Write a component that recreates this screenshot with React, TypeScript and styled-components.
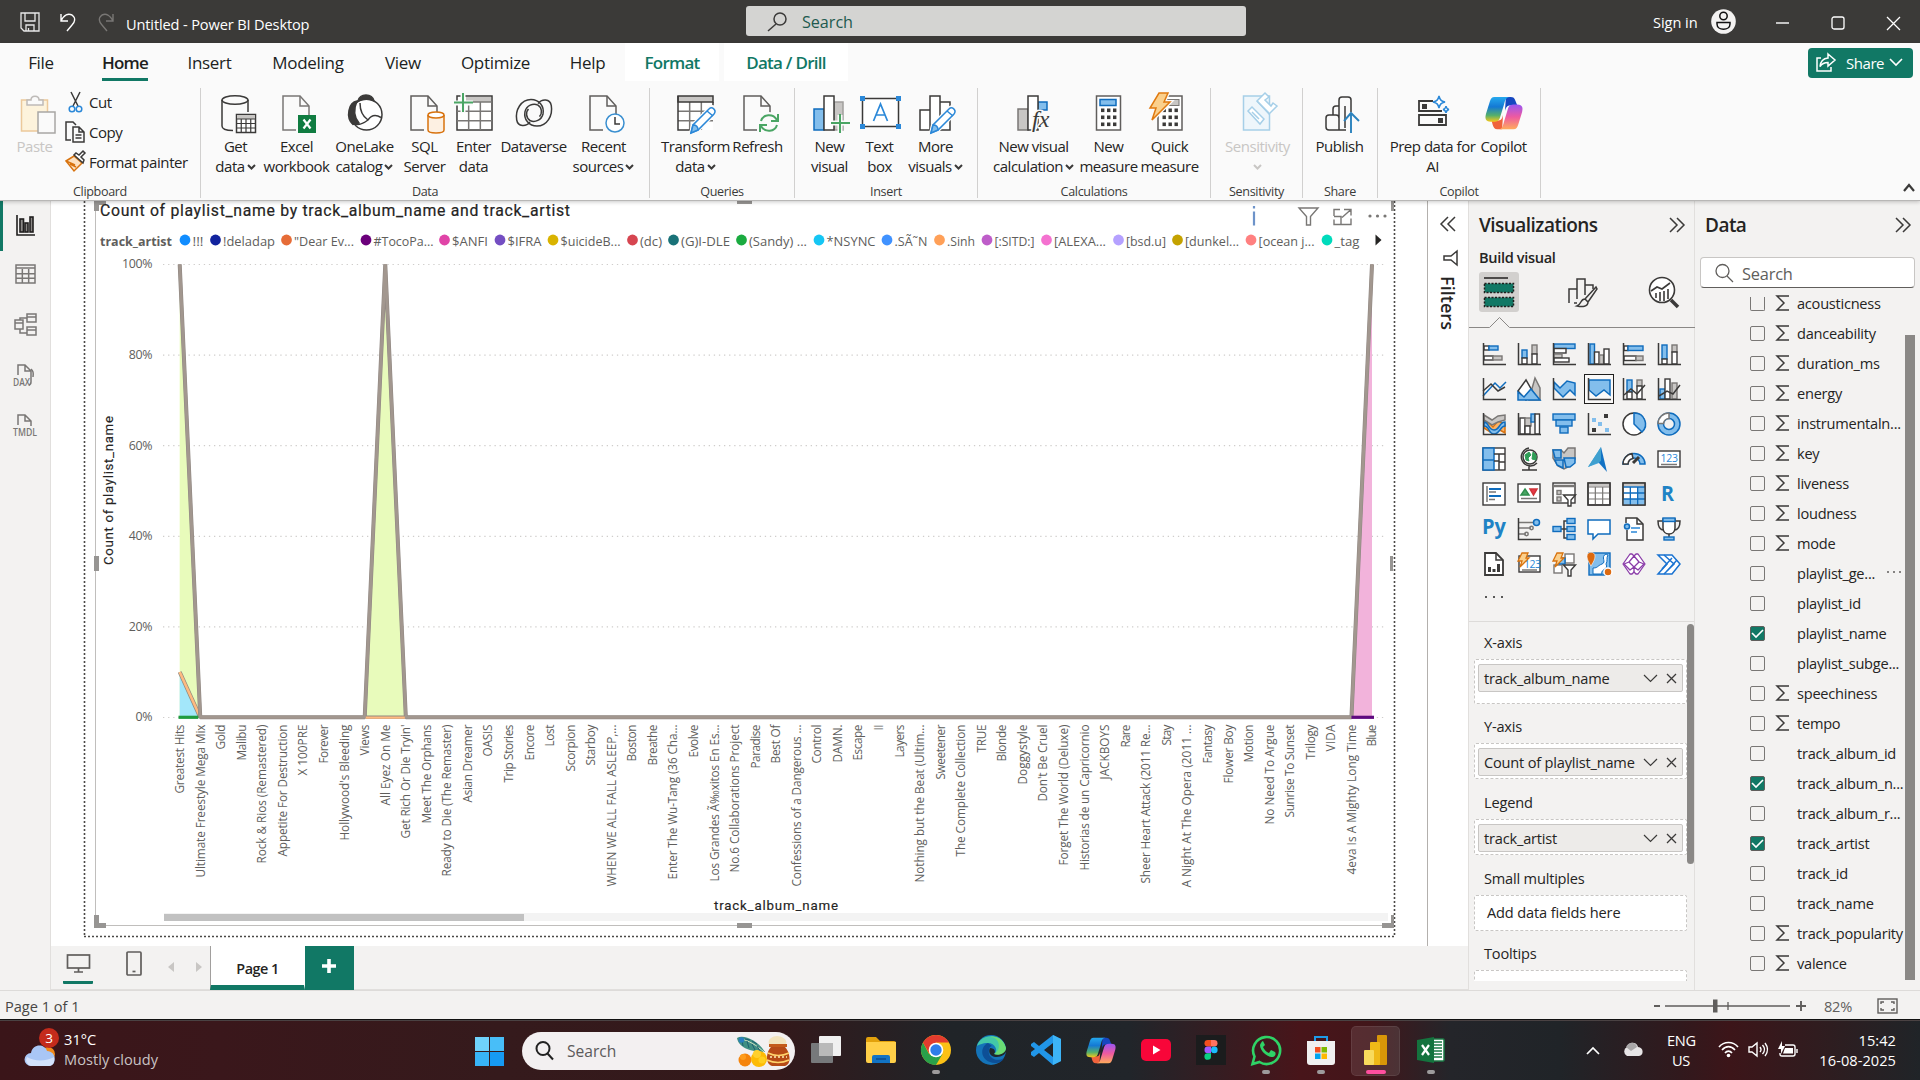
import React from "react";
import styled, { createGlobalStyle } from "styled-components";

const GREEN = "#117865";
const INK = "#252423";
const PANE = "#f3f2f1";
const G = "#3b3a39";
const M = "#797775";
const B = "#0f6cbd";
const LB = "#83beec";
const UI = `"Open Sans", "Noto Sans", "Liberation Sans", sans-serif`;

const Global = createGlobalStyle`
  * { box-sizing: border-box; }
  body { margin: 0; overflow: hidden; font-family: ${UI}; font-size: 15px; letter-spacing: -0.35px; color: ${INK}; }
  svg { display: block; flex: none; overflow: visible; }
`;

const Screen = styled.div`
  width: 1920px; height: 1080px; display: flex; flex-direction: column; background: #fff; overflow: hidden;
`;

/* ---------- title bar ---------- */
const TitleBar = styled.header`
  height: 43px; flex: none; display: flex; align-items: center; background: #3b3a38; color: #fff; padding-left: 20px;
`;
const QuickIcons = styled.div` display: flex; gap: 18px; width: 106px; `;
const AppTitle = styled.div` width: 620px; padding-top: 5px; font-size: 14.6px; letter-spacing: -0.14px; `;
const TitleSearch = styled.div`
  width: 500px; height: 30px; background: #d4d4d2; border-radius: 3px; display: flex; align-items: center; gap: 15px; margin-top: -1px;
  padding: 1px 0 0 21px; color: #215a4f; font-size: 16.2px; letter-spacing: -0.05px;
`;
const SignIn = styled.div`
  margin-left: 407px; display: flex; align-items: center; gap: 13px; font-size: 14.6px; letter-spacing: -0.05px;
`;
const WindowButtons = styled.div` display: flex; gap: 42px; margin-left: 40px; align-items: center; padding-top: 3px; `;

/* ---------- ribbon ---------- */
const RibbonWrap = styled.section`
  height: 158px; flex: none; background: #fafafa; border-bottom: 1px solid #b8b7b6; box-shadow: 0 1px 4px rgba(0,0,0,.22);
  position: relative; z-index: 2; display: flex; flex-direction: column;
`;
const TabRow = styled.nav` display: flex; height: 38px; font-size: 17px; letter-spacing: -0.3px; `;
const Tab = styled.div<{ w: number; $active?: boolean; $context?: boolean; $gap?: number }>`
  width: ${p => p.w}px; margin-right: ${p => p.$gap || 0}px; display: flex; align-items: flex-start; justify-content: center; white-space: nowrap;
  font-weight: ${p => (p.$active || p.$context ? 600 : 400)};
  letter-spacing: ${p => (p.$active || p.$context ? "-0.75px" : "-0.3px")};
  color: ${p => (p.$context ? GREEN : "#201f1e")};
  background: ${p => (p.$context ? "#fff" : "transparent")};
  span { height: 38px; display: flex; align-items: center; box-shadow: ${p => (p.$active ? `inset 0 -3px ${GREEN}` : "none")}; }
`;
const ShareButton = styled.div`
  margin: 5px 7px 0 auto; width: 105px; height: 30px; border-radius: 4px; background: ${GREEN}; color: #fff; display: flex; align-items: center;
  padding: 0 0 1px 8px; gap: 5px; font-size: 15px; letter-spacing: -0.45px; span { padding-left: 5px; }
`;
const Groups = styled.div` display: flex; padding-top: 7px; height: 118px; `;
const Group = styled.div<{ w: number }>`
  width: ${p => p.w}px; height: 110px; border-right: 1px solid #d1d0cf; display: flex; flex-direction: column;
`;
const GroupBody = styled.div<{ $pad: number }>` display: flex; flex: 1; padding-left: ${p => p.$pad}px; `;
const GroupLabel = styled.div` height: 18px; line-height: 18px; margin-bottom: -3px; text-align: center; font-size: 12.6px; letter-spacing: -0.35px; color: #3b3a39; white-space: nowrap; `;
const RibbonButton = styled.div<{ w: number; $off?: boolean }>`
  width: ${p => p.w}px; flex: none; display: flex; flex-direction: column; align-items: center; padding-top: 4px; color: ${p => (p.$off ? "#c8c6c4" : INK)};
`;
const RibbonText = styled.div`
  line-height: 20px; font-size: 15px; letter-spacing: -0.48px; text-align: center; white-space: nowrap; margin-left: -1px;
  div { display: flex; align-items: center; justify-content: center; gap: 2px; height: 20px; }
  svg { margin-top: 2px; }
`;
const ClipList = styled.div` display: flex; flex-direction: column; margin: -1px 0 1px; `;
const ClipItem = styled.div` height: 30px; display: flex; align-items: center; gap: 3px; letter-spacing: -0.43px; white-space: nowrap; `;
const Collapse = styled.div` margin-left: auto; padding: 95px 5px 0 0; `;

/* ---------- workspace ---------- */
const Workspace = styled.main` display: flex; height: 789px; flex: none; background: ${PANE}; `;
const Rail = styled.aside`
  width: 51px; border-right: 1px solid #e1dfdd; background: ${PANE}; display: flex; flex-direction: column; flex: none;
`;
const RailItem = styled.div<{ $active?: boolean }>`
  height: 50px; display: flex; align-items: center; padding: 0 0 2px ${p => (p.$active ? 9 : 12)}px; border-left: ${p => (p.$active ? `3px solid ${GREEN}` : "none")};
`;
const Center = styled.div` width: 1418px; flex: none; display: flex; flex-direction: column; border-right: 1px solid #e1dfdd; `;
const CanvasRow = styled.div` height: 745px; display: flex; background: #fff; `;
const Canvas = styled.div` width: 1377px; border-right: 1px solid #b3b0ad; `;
const FiltersPane = styled.div` display: flex; flex-direction: column; align-items: center; gap: 18px; width: 42px; padding-top: 15px; `;
const FilterGlyph = styled.div` padding-left: 5px; `;
const FiltersTitle = styled.div` writing-mode: vertical-rl; font-size: 18px; font-weight: 600; letter-spacing: 0.05px; margin-top: -8px; `;

const PageBar = styled.div` height: 44px; display: flex; background: ${PANE}; border-bottom: 1px solid #e1dfdd; `;
const LayoutButton = styled.div<{ $active?: boolean }>`
  width: 30px; height: 38px; padding-top: 5px; display: flex; justify-content: center; border-bottom: 3px solid ${p => (p.$active ? GREEN : "transparent")}; border-radius: 1px;
`;
const LayoutButtons = styled.div` display: flex; gap: 26px; padding-left: 12px; width: 117px; `;
const PageArrows = styled.div` width: 42px; display: flex; gap: 22px; padding-top: 16px; `;
const PageTab = styled.div`
  width: 95px; border-left: 1px solid #a19f9d; border-right: 1px solid #fff; border-bottom: 5px solid ${GREEN}; background: #fff; height: 44px;
  display: flex; align-items: center; justify-content: center; padding-top: 5px; font-weight: 600; font-size: 14.4px; letter-spacing: -0.5px;
`;
const AddPage = styled.div` width: 49px; height: 44px; background: ${GREEN}; display: flex; align-items: center; justify-content: center; padding: 0 2px 4px 0; `;

/* ---------- visualizations pane ---------- */
const VizPane = styled.aside` width: 226px; flex: none; border-right: 1px solid #e1dfdd; display: flex; flex-direction: column; `;
const PaneHead = styled.div`
  height: 44px; padding: 4px 9px 0 10px; display: flex; justify-content: space-between; align-items: center; font-size: 19px; font-weight: 600; letter-spacing: -0.53px;
`;
const BuildLabel = styled.div` height: 28px; padding: 2px 0 0 10px; font-size: 14.6px; font-weight: 600; letter-spacing: -0.35px; `;
const ModeRow = styled.div` height: 40px; padding: 0 10px; display: flex; justify-content: space-between; align-items: center; margin-top: -1px; `;
const Mode = styled.div<{ $on?: boolean }>`
  width: 40px; height: 40px; display: flex; align-items: center; justify-content: center; border-radius: 3px; background: ${p => (p.$on ? "#d2d0ce" : "transparent")};
`;
const Gallery = styled.div` display: grid; grid-template-columns: repeat(6, 35px); grid-auto-rows: 35px; padding: 5px 0 0 10px; height: 251px; `;
const GalleryCell = styled.div<{ $on?: boolean }>`
  width: 30px; height: 30px; border: 1px solid ${p => (p.$on ? "#201f1e" : "transparent")}; display: flex; align-items: center; justify-content: center; background: ${p => (p.$on ? "#faf9f8" : "transparent")};
`;
const Dots = styled.div<{ $size: number; $gap: number; $color: string }>`
  display: flex; gap: ${p => p.$gap}px;
  i { width: ${p => p.$size}px; height: ${p => p.$size}px; border-radius: 50%; background: ${p => p.$color}; }
`;
const MoreVisuals = styled.div` height: 37px; padding: 11px 0 0 16px; border-bottom: 1px solid #dddbd9; `;
const Wells = styled.div` display: flex; justify-content: space-between; height: 359px; overflow: hidden; `;
const WellList = styled.div` width: 218px; padding-left: 5px; display: flex; flex-direction: column; flex: none; `;
const WellLabel = styled.div<{ $top: number; $bottom?: number }>`
  margin: ${p => p.$top}px 0 ${p => p.$bottom || 5}px; padding-left: 10px; height: 22px; line-height: 22px; font-size: 14.6px; letter-spacing: -0.2px; flex: none;
`;
const Well = styled.div<{ h: number }>`
  width: 213px; height: ${p => p.h}px; flex: none; background: #fff; border: 1px dashed #c8c6c4; border-radius: 2px; padding: 4px 3px;
`;
const Pill = styled.div`
  height: 28px; width: 205px; background: #edebe9; border: 1px solid #c8c6c4; border-radius: 2px; display: flex; align-items: center; padding: 0 5px; gap: 8px;
  font-size: 14.6px; letter-spacing: -0.2px; white-space: nowrap; span { flex: 1; }
`;
const Hint = styled.div` padding: 2px 0 0 9px; font-size: 14.6px; letter-spacing: -0.15px; `;
const WellScroll = styled.div` width: 7px; height: 240px; margin-top: 2px; border-radius: 4px; background: #8a8886; `;

/* ---------- data pane ---------- */
const DataPane = styled.aside` width: 225px; flex: none; display: flex; flex-direction: column; `;
const DataSearch = styled.div`
  margin: 12px 5px 0 5px; height: 31px; border: 1px solid #c8c6c4; border-bottom-color: #605e5c; border-radius: 4px; background: #fff; display: flex; align-items: center;
  gap: 9px; padding: 1px 0 0 14px; font-size: 16.4px; letter-spacing: -0.2px; color: #605e5c;
`;
const FieldArea = styled.div` display: flex; height: 683px; margin-top: 9px; padding-right: 5px; `;
const FieldList = styled.div` width: 205px; flex: none; `;
const Field = styled.div<{ $cut?: boolean }>`
  height: ${p => (p.$cut ? 21 : 30)}px; padding: 0 0 ${p => (p.$cut ? 9 : 0)}px 55px; display: flex; align-items: center; white-space: nowrap;
`;
const Check = styled.div<{ $on?: boolean; $cut?: boolean }>`
  width: 15px; height: ${p => (p.$cut ? 14 : 15)}px; border-radius: ${p => (p.$cut ? "0 0 2px 2px" : "2px")}; margin-top: ${p => (p.$cut ? 2 : 0)}px;
  border: 1px solid ${p => (p.$on ? "#605e5c" : "#797775")}; border-top-width: ${p => (p.$cut ? 0 : 1)}px;
  background: ${p => (p.$on ? GREEN : "transparent")}; display: flex; align-items: center; justify-content: center; flex: none;
`;
const SigmaSlot = styled.div` width: 32px; padding-left: 11px; flex: none; `;
const FieldName = styled.div` width: 108px; flex: none; font-size: 14.6px; letter-spacing: -0.25px; `;
const FieldMore = styled.div` margin-left: -18px; margin-top: -2px; `;
const FieldScroll = styled.div` width: 10px; margin: 38px 0 0 5px; height: 645px; background: #8a8886; flex: none; `;

/* ---------- status bar ---------- */
const StatusBar = styled.footer`
  height: 30px; flex: none; background: ${PANE}; border-top: 1px solid #dddbd9; border-bottom: 1px solid #111; display: flex; align-items: center; justify-content: space-between;
  padding: 1px 22px 0 5px; font-size: 14.6px; letter-spacing: -0.02px; color: #484644;
`;
const ZoomTools = styled.div` display: flex; align-items: center; color: #605e5c; gap: 21px; span { margin: 0 4px 0 -3px; letter-spacing: -0.25px; } `;

/* ---------- taskbar ---------- */
const Taskbar = styled.footer`
  height: 60px; flex: none; display: flex; align-items: center; border-top: 1px solid #4a4243; color: #fff;
  background: linear-gradient(90deg, #3a1519 0, #3a171b 220px, #351a1c 500px, #33191b 780px, #202428 950px, #21252a 1130px, #48151a 1300px, #42161a 1370px, #24252a 1450px, #202428 1560px, #31191d 1680px, #3c1519 1730px, #2e1d20 1830px, #202428 1920px);
`;
const Weather = styled.div` display: flex; gap: 5px; padding: 0 0 1px 24px; width: 474px; align-items: center; `;
const Lines = styled.div<{ $align?: string; w?: number }>`
  width: ${p => (p.w ? p.w + "px" : "auto")}; text-align: ${p => p.$align || "left"}; line-height: 20px; font-size: 14.6px; letter-spacing: ${p => (p.$align === "center" ? "-0.3px" : "0.05px")};
  white-space: nowrap; margin-top: -2px;
  small { font-size: inherit; color: #c9c3c4; }
`;
const TaskSearch = styled.div`
  width: 273px; height: 38px; margin: 0 3px 0 18px; border-radius: 19px; background: #f3f0f1; color: #5c5a5b; display: flex; align-items: center; gap: 13px; padding: 0 5px 0 13px;
  font-size: 15.6px; letter-spacing: 0; span { flex: 1; }
`;
const Apps = styled.div` display: flex; `;
const AppSlot = styled.div<{ $on?: boolean }>`
  width: 49px; height: 50px; margin: 0 3px; border-radius: 5px; display: flex; flex-direction: column; align-items: center; padding-top: 9px; gap: 5px;
  background: ${p => (p.$on ? "rgba(255,255,255,.1)" : "transparent")}; box-shadow: ${p => (p.$on ? "inset 0 0 0 1px rgba(255,255,255,.08)" : "none")};
`;
const Running = styled.i<{ $on?: boolean }>` width: ${p => (p.$on ? 20 : 8)}px; height: 4px; border-radius: 2px; background: ${p => (p.$on ? "#ff4f9f" : "#9d9b9c")}; `;
const Tray = styled.div` margin-left: auto; display: flex; align-items: center; padding-right: 24px; `;
const TrayCloud = styled.div` width: 67px; padding-left: 22px; margin-top: -1px; `;
const TrayIcons = styled.div` display: flex; gap: 9px; width: 101px; padding-left: 23px; margin-top: -2px; `;

/* ---------- small drawings ---------- */
type SvgProps = { w: number; h: number; children?: React.ReactNode; s?: string; sw?: number };
const I = ({ w, h, children, s = G, sw = 1.5 }: SvgProps) => (
  <svg width={w} height={h} viewBox={`0 0 ${w} ${h}`} fill="none" stroke={s} strokeWidth={sw}>{children}</svg>
);
const Caret = ({ c = G }: { c?: string }) => <I w={9} h={6} s={c} sw={2}><path d="M1 1l3.5 3.5L8 1" /></I>;
const Doc = ({ x = 10, c = "#605e5c" }: { x?: number; c?: string }) => (
  <g transform={`translate(${x} 4)`} stroke={c}><path d="M26 18V12L17 0H0v34h16" fill="#fafafa" stroke="none" /><path d="M13 34H0V0h17l9 10v9" /><path d="M17 0v10h9" /></g>
);
const Pencil = ({ x, y }: { x: number; y: number }) => (
  <g transform={`translate(${x} ${y})`}><path d="M1 26l2-8L20 1c3-3 8 1 5 5L8 23z" fill="#fafafa" stroke="#fafafa" strokeWidth="4" /><path d="M1 26l2-8L19 2c3-3 8 1 5 5L8 23z" fill="#fff" stroke="#2b88d8" /><path d="M1 26l2-8c4 0 5 2 5 5z" fill={LB} stroke="#2b88d8" /><path d="M17 4l6 5" stroke="#2b88d8" /></g>
);
const Calc = ({ x }: { x: number }) => (
  <g transform={`translate(${x} 4)`}><rect width="24" height="34" fill="#fff" stroke="#605e5c" />{[14, 21, 28].map(y => [4.5, 10.5, 16.5].map(a => <rect key={a + "-" + y} x={a} y={y - 1.5} width="3.4" height="3.6" fill={G} stroke="none" />))}</g>
);
const Ribbon48 = ({ children, s = G }: { children: React.ReactNode; s?: string }) => <I w={48} h={44} s={s}>{children}</I>;

const CopilotMark = ({ size, id }: { size: number; id: string }) => (
  <svg width={size} height={size * 0.9} viewBox="0 0 40 36">
    <defs>
      <linearGradient id={id + "a"} x1="0" y1="0" x2="0" y2="1"><stop offset="0" stopColor="#25a9ee" /><stop offset=".4" stopColor="#1479d4" /><stop offset=".75" stopColor="#56b06a" /><stop offset="1" stopColor="#f4c81c" /></linearGradient>
      <linearGradient id={id + "b"} x1="0" y1="0" x2="0" y2="1"><stop offset="0" stopColor="#9a55f2" /><stop offset=".5" stopColor="#ee5aa0" /><stop offset="1" stopColor="#ffac5c" /></linearGradient>
    </defs>
    <path d="M22 1h5c3 0 4 1 5 4l2 5h-7c-4 0-5 2-6 6z" fill="#1647c0" />
    <path d="M18 35h-5c-3 0-4-2-5-5l-1-4h6c4 0 5-2 6-6z" fill="#f0633c" />
    <path d="M10 1h16c-4 0-5 4-6 8l-4 13c-1 4-3 5-7 5H6c-6 0-6-4-5-8L5 6c1-3 2-5 5-5z" fill={`url(#${id}a)`} />
    <path d="M30 35H14c4 0 5-4 6-8l4-13c1-4 3-5 7-5h3c6 0 6 4 5 8l-4 13c-1 3-2 5-5 5z" fill={`url(#${id}b)`} />
  </svg>
);

/* ---------- ribbon data ---------- */
type Btn = { w: number; a: string; b?: string; caret?: boolean; off?: boolean; icon: React.ReactNode };
const grid = (x: number, y: number, w: number, h: number, c: number, r: number) => {
  let d = "";
  for (let i = 1; i < c; i++) d += `M${x + (w * i) / c} ${y}v${h}`;
  for (let i = 1; i < r; i++) d += `M${x} ${y + (h * i) / r}h${w}`;
  return d;
};
const SWIRL = "M20 30C16 35 8 35 6.700 28C5 18 11 7.500 21 7.500C29 7.500 34.500 14 33 22C31.500 28 25 31 20 28.500C16 26 15.500 20 18.500 17";
const groups: { label: string; w: number; pad: number; btns: Btn[] }[] = [
  { label: "Data", w: 449, pad: 7, btns: [
    { w: 56, a: "Get", b: "data", caret: true, icon: <Ribbon48><ellipse cx="23" cy="8" rx="13" ry="4.3" /><path d="M10 8v26c0 3 5 4.5 11 4.5M36 8v12" /><rect x="24.500" y="22.500" width="19" height="18" fill="#fff" /><rect x="25" y="23" width="18" height="4" fill="#c8c6c4" stroke="none" /><path d={grid(24.5, 27, 19, 13.5, 4, 3) + "M24.500 27h19"} strokeWidth="1.2" /></Ribbon48> },
    { w: 66, a: "Excel", b: "workbook", icon: <Ribbon48><Doc x={10} c="#797775" /><rect x="25" y="23" width="18" height="18" fill="#107c41" stroke="none" /><path d="M30.500 27.500l7 9M37.500 27.500l-7 9" stroke="#fff" strokeWidth="2.2" /></Ribbon48> },
    { w: 70, a: "OneLake", b: "catalog", caret: true, icon: <Ribbon48><circle cx="25.500" cy="22.500" r="15.500" fill="#fff" /><path d="M16 9C8 10 4 25 12 32.500L18 31C12 24 13 16 16 9z" fill={G} /><path d="M17 9C19 1 31 1 33 9C27 6 22 7 17 9z" fill={G} /><path d="M19 11C19 19 21 24 27 28M11 31C17 35 23 31 27 28C31 22 36 23 40 25.500" /></Ribbon48> },
    { w: 50, a: "SQL", b: "Server", icon: <Ribbon48><Doc x={10} /><path d="M27 23v15c0 4 16 4 16 0V23" fill="#fdf0e2" stroke="#d8730f" /><ellipse cx="35" cy="23" rx="8" ry="3" fill="#fff" stroke="#d8730f" /></Ribbon48> },
    { w: 48, a: "Enter", b: "data", icon: <Ribbon48><rect x="7" y="4" width="35" height="34" fill="#fff" /><rect x="16" y="5" width="25" height="5" fill="#c8c6c4" stroke="none" /><path d={grid(7, 10, 35, 28, 3, 3)} stroke="#797775" /><path d="M7 10h35" stroke="#797775" /><path d="M13 2v19M4 11h19" stroke="#fafafa" strokeWidth="5" /><path d="M13 1v19M4 10.500h19" stroke="#4aa564" strokeWidth="2" /></Ribbon48> },
    { w: 72, a: "Dataverse", icon: <Ribbon48><path d={SWIRL} /><path d={SWIRL} transform="rotate(180 24 20.800)" /></Ribbon48> },
    { w: 68, a: "Recent", b: "sources", caret: true, icon: <Ribbon48><Doc x={10} /><circle cx="35" cy="31" r="9" fill="#fff" stroke="#3a8fd0" /><path d="M35 25v7h5" stroke={G} /></Ribbon48> },
  ] },
  { label: "Queries", w: 145, pad: 11, btns: [
    { w: 70, a: "Transform", b: "data", caret: true, icon: <Ribbon48><rect x="6" y="4" width="35" height="34" fill="#fff" stroke="none" /><path d={grid(6, 10, 35, 28, 3, 3)} stroke="#797775" /><rect x="6" y="4" width="35" height="6" fill="#c8c6c4" /><path d="M6 4v34h12M41 10v4" /><Pencil x={18} y={15} /></Ribbon48> },
    { w: 54, a: "Refresh", icon: <Ribbon48><Doc x={10} c="#605e5c" /><circle cx="35" cy="31" r="11" fill="#fafafa" stroke="none" /><path d="M27 29c2-7 12-8 16-1M44 22v7h-7M43 33c-2 7-12 8-16 1M26 40v-7h7" stroke="#4aa564" strokeWidth="2" /></Ribbon48> },
  ] },
  { label: "Insert", w: 183, pad: 9, btns: [
    { w: 52, a: "New", b: "visual", icon: <Ribbon48><rect x="8" y="17" width="10" height="21" fill={LB} stroke={B} /><rect x="28" y="10" width="9" height="28" fill="#c8c6c4" stroke="#a19f9d" /><rect x="18" y="4" width="10" height="34" fill="#fff" /><path d="M34 23v18M25 31h19" stroke="#fafafa" strokeWidth="5" /><path d="M34 22v19M25 31h19" stroke="#4aa564" strokeWidth="2" /></Ribbon48> },
    { w: 48, a: "Text", b: "box", icon: <Ribbon48><rect x="6.500" y="6.500" width="36" height="28" fill="#fff" />{[[4, 4], [40, 4], [4, 32], [40, 32]].map(([x, y]) => <rect key={x + "," + y} x={x} y={y} width="5" height="5" fill="#2b88d8" stroke="none" />)}<path d="M17.500 29l7-17 7 17M20 23h9" stroke="#2b88d8" strokeWidth="1.700" /></Ribbon48> },
    { w: 64, a: "More", b: "visuals", caret: true, icon: <Ribbon48><path d="M8 38V18h10V4h10v34zM28 10h10v28H28M18 18v20" fill="#fff" /><Pencil x={18} y={15} /></Ribbon48> },
  ] },
  { label: "Calculations", w: 233, pad: 10, btns: [
    { w: 92, a: "New visual", b: "calculation", caret: true, icon: <Ribbon48><rect x="8" y="17" width="10" height="21" fill="#c8c6c4" stroke="#797775" /><path d="M28 10h9v8h-9z" fill={LB} stroke={B} /><rect x="18" y="4" width="10" height="34" fill="#fff" /><text x="22" y="35" fontFamily="Liberation Serif, serif" fontStyle="italic" fontSize="24" letterSpacing="0" fill={G} stroke="#fafafa" strokeWidth="3" paintOrder="stroke">fx</text></Ribbon48> },
    { w: 58, a: "New", b: "measure", icon: <Ribbon48><Calc x={11.5} /><rect x="15" y="7.500" width="16" height="6" fill={LB} stroke={B} /></Ribbon48> },
    { w: 64, a: "Quick", b: "measure", icon: <Ribbon48><Calc x={12} /><rect x="20" y="7.500" width="13" height="6" fill="#c8c6c4" stroke="#797775" strokeWidth="1" /><path d="M13 1h9l-4 9h6L6 28l4-12H4z" fill="#fbd08c" stroke="#fafafa" strokeWidth="4" /><path d="M13 1h9l-4 9h6L6 28l4-12H4z" fill="#fbd08c" stroke="#e07a10" /></Ribbon48> },
  ] },
  { label: "Sensitivity", w: 92, pad: 12, btns: [
    { w: 70, a: "Sensitivity", b: "", caret: true, off: true, icon: <Ribbon48 s="#a6cfe8"><rect x="9.500" y="4" width="26" height="34" fill="#eef6fb" /><path d="M14 19l4-4 12 12-4 5z" fill="#fff" /><path d="M18 20l7 7M23 9l8-8 4 4-4 3 6 6 2-3 4 3-8 8z" fill="#fff" /><path d="M23 9l12 12" /></Ribbon48> },
  ] },
  { label: "Share", w: 75, pad: 7, btns: [
    { w: 60, a: "Publish", icon: <Ribbon48><path d="M22 38V8q0-3 3-3h6q3 0 3 3v12M16 23v-6q0-3 3-3h3M12 23h7q3 0 3 3v12H12q-3 0-3-3v-9q0-3 3-3zM22 38h7M28 14v22" transform="translate(1 0)" /><path d="M35 41V22M28 29l7-8 8 8" stroke="#2b82bd" strokeWidth="1.900" /></Ribbon48> },
  ] },
  { label: "Copilot", w: 163, pad: 10, btns: [
    { w: 90, a: "Prep data for", b: "AI", icon: <Ribbon48><path d="M24 9H10v10h23M10 23h27v10H10z" strokeWidth="1.800" /><rect x="13" y="12" width="5" height="5" fill={G} stroke="none" /><rect x="29" y="26" width="5" height="5" fill={G} stroke="none" /><path d="M30 4c1 4 2 5 6 6-4 1-5 2-6 6-1-4-2-5-6-6 4-1 5-2 6-6zM37 14q.5 3 3 3.500-2.500.5-3 3.500-.5-3-3-3.500 2.500-.5 3-3.500z" stroke="#2b88d8" fill="#fff" /></Ribbon48> },
    { w: 52, a: "Copilot", icon: <Ribbon48><svg x="5" y="4" width="38" height="35" stroke="none"><CopilotMark size={38} id="rb" /></svg></Ribbon48> },
  ] },
];

/* ---------- chart ---------- */
const legend: [string, string, number, number][] = [
  ["!!!", "#118dff", 185, 11], ["!deladap", "#12239e", 215.5, 52], ['"Dear Ev...', "#e66c37", 286.500, 60], ["#TocoPa...", "#6b007b", 366, 60], ["$ANFI", "#e044a7", 444.500, 36],
  ["$IFRA", "#744ec2", 500, 34], ["$uicideB...", "#d9b300", 553, 60], ["(dc)", "#d64550", 632.500, 22], ["(G)I-DLE", "#197278", 673.500, 49], ["(Sandy) ...", "#1aab40", 741.500, 58],
  ["*NSYNC", "#15c6f4", 819, 49], [".SÃ˜N", "#4092ff", 887, 33], [".Sinh", "#ffa058", 939.500, 28], ["[:SITD:]", "#be5dc9", 987, 40], ["[ALEXA...", "#f472d0", 1046.500, 52],
  ["[bsd.u]", "#b5a1ff", 1118.500, 40], ["[dunkel...", "#c4a200", 1177.500, 54], ["[ocean j...", "#ff8080", 1251, 56], ["_tag", "#00dbbc", 1327, 25],
];
const albums: [string, number][] = [
  ["Greatest Hits", 69], ["Ultimate Freestyle Mega Mix", 153], ["Gold", 25], ["Malibu", 36], ["Rock & Rios (Remastered)", 139], ["Appetite For Destruction", 132], ["X 100PRE", 51],
  ["Forever", 39], ["Hollywood's Bleeding", 116], ["Views", 31], ["All Eyez On Me", 81], ["Get Rich Or Die Tryin'", 114], ["Meet The Orphans", 99], ["Ready to Die (The Remaster)", 152],
  ["Asian Dreamer", 78], ["OASIS", 32], ["Trip Stories", 58], ["Encore", 36], ["Lost", 22], ["Scorpion", 47], ["Starboy", 41], ["WHEN WE ALL FALL ASLEEP,...", 162], ["Boston", 37],
  ["Breathe", 41], ["Enter The Wu-Tang (36 Cha...", 155], ["Evolve", 33], ["Los Grandes Ã‰xitos En Es...", 157], ["No.6 Collaborations Project", 148], ["Paradise", 44], ["Best Of", 39],
  ["Confessions of a Dangerous ...", 162], ["Control", 39], ["DAMN.", 38], ["Escape", 36], ["II", 6], ["Layers", 33], ["Nothing but the Beat (Ultim...", 158], ["Sweetener", 55],
  ["The Complete Collection", 132], ["TRUE", 28], ["Blonde", 37], ["Doggystyle", 60], ["Don't Be Cruel", 77], ["Forget The World (Deluxe)", 141], ["Historias de un Capricornio", 146],
  ["JACKBOYS", 55], ["Rare", 23], ["Sheer Heart Attack (2011 Re...", 159], ["Stay", 21], ["A Night At The Opera (2011 ...", 163], ["Fantasy", 39], ["Flower Boy", 59], ["Motion", 38],
  ["No Need To Argue", 100], ["Sunrise To Sunset", 93], ["Trilogy", 35], ["VIDA", 27], ["4eva Is A Mighty Long Time", 150], ["Blue", 22],
];
const px = (i: number) => 179.7 + (i * 1192.3) / 58;
const py = (v: number) => 717.3 - (v / 100) * 453;
const BASE = 717.300;
const LINE = "#a2978f";

const Chart = () => (
  <svg width="1376" height="745" viewBox="51 201 1376 745" fontFamily={UI} letterSpacing="0">
    <path d="M84.500 201V936.500M1394.500 201V936.500M84 936.500H1395" stroke="#4a4846" strokeWidth="1.600" strokeDasharray="2 2" />
    <path d="M95.500 201V925.500H1391.500" stroke="#c0bebc" fill="none" />
    <g fill="#979593">
      <path d="M94 201h12v4h-7v6h-5zM94 915h5v8h7v5H94zM1394 915h-3v8h-9v5h12z" />
      <rect x="94" y="556" width="5" height="15" /><rect x="1390" y="556" width="3" height="15" />
      <rect x="737" y="200" width="15" height="4" /><rect x="737" y="923" width="15" height="5" /><rect x="1391" y="201" width="3" height="10" />
    </g>
    <text x="100" y="216" fontFamily={`Roboto, ${UI}`} fontSize="15.800" textLength="470" fill="#252423" stroke="#252423" strokeWidth=".2">Count of playlist_name by track_album_name and track_artist</text>
    <g fill="none" stroke="#797775" strokeWidth="1.400">
      <path d="M1254 211.500v14M1254 206v2.500" stroke="#6d93c9" strokeWidth="2.200" />
      <path d="M1299 208h19l-7.500 8.500v8.500h-4v-8.500z" />
      <path d="M1340 209.500h-6v6.500M1334 219.500v5h17v-6M1334 216.500h7v8M1344 209.500h7v6M1351 209.500l-9 8" />
    </g>
    <g fill="#797775"><circle cx="1370" cy="216" r="1.600" /><circle cx="1377.500" cy="216" r="1.600" /><circle cx="1385" cy="216" r="1.600" /></g>
    <text x="100" y="245.600" fontSize="13" fontWeight="700" textLength="72" lengthAdjust="spacingAndGlyphs" fill="#605e5c">track_artist</text>
    {legend.map(([t, c, x, w]) => (
      <g key={t}><circle cx={x} cy="240" r="5.400" fill={c} /><text x={x + 7.500} y="245.600" fontSize="13.500" textLength={w} lengthAdjust="spacingAndGlyphs" fill="#605e5c">{t}</text></g>
    ))}
    <path d="M1375.500 234.500l6 5.500-6 5.500z" fill="#252423" />
    {[100, 80, 60, 40, 20, 0].map(v => (
      <g key={v}><path d={`M163 ${py(v) + 0.2}H1386`} stroke="#cfcdcb" strokeWidth="1.200" strokeDasharray="1.300 3.800" /><text x="152" y={py(v) + 4} textAnchor="end" fontSize="12.400" letterSpacing="-0.4" fill="#605e5c">{v}%</text></g>
    ))}
    <path d={`M${px(0)} ${py(100)}L${px(1)} ${BASE}H${px(0)}z M${px(9)} ${BASE}L${px(10)} ${py(100)}L${px(11)} ${BASE}z`} fill="#e8fbbb" />
    <path d={`M${px(0)} ${py(10)}L${px(1)} ${BASE}H${px(0)}z`} fill="#a3e7fa" />
    <path d={`M${px(57)} ${BASE}L${px(58)} ${py(100)}V${BASE}z`} fill="#f2b3db" />
    <path d={`M${px(0)} ${py(10)}L${px(1)} ${BASE}`} stroke="#8f8a80" strokeWidth="4" /><path d={`M${px(0)} ${py(10)}L${px(1)} ${BASE}`} stroke="#ffba80" strokeWidth="2.600" />
    <path d={`M${px(0)} ${py(100)}L${px(1)} ${BASE}H${px(9)}L${px(10)} ${py(100)}L${px(11)} ${BASE}H${px(57)}L${px(58)} ${py(100)}`} fill="none" stroke="#8f8782" strokeWidth="4" strokeLinejoin="bevel" />
    <path d={`M${px(0)} ${py(100)}L${px(1)} ${BASE}H${px(9)}L${px(10)} ${py(100)}L${px(11)} ${BASE}H${px(57)}L${px(58)} ${py(100)}`} fill="none" stroke={LINE} strokeWidth="3" strokeLinejoin="bevel" />
    <path d={`M${px(9) + 1} ${BASE}H${px(11) - 1}`} stroke="#8f8a80" strokeWidth="3.600" /><path d={`M${px(9) + 1} 717.600H${px(11) - 1}`} stroke="#ffba80" strokeWidth="2.400" />
    <path d={`M178.500 ${BASE}H${px(1) - 2}`} stroke="#1f9c40" strokeWidth="3.200" />
    <path d={`M${px(57)} ${BASE}H1374`} stroke="#5f0a7f" strokeWidth="3.200" />
    {albums.map(([t, w], i) => (
      <text key={t} transform={`translate(${px(i) + 4.400} ${724.500 + w}) rotate(-90)`} fontSize="11.800" textLength={w} fill="#605e5c">{t}</text>
    ))}
    <text transform="translate(112.500 565) rotate(-90)" fontFamily={`Roboto, ${UI}`} fontSize="13.300" textLength="149" fill="#252423" stroke="#252423" strokeWidth=".15">Count of playlist_name</text>
    <text x="714" y="910" fontFamily={`Roboto, ${UI}`} fontSize="13.300" textLength="124" fill="#252423" stroke="#252423" strokeWidth=".15">track_album_name</text>
    <rect x="164" y="913" width="1224" height="8" fill="#f3f3f3" /><rect x="164" y="914" width="360" height="7" fill="#c1c1c1" />
  </svg>
);

/* ---------- gallery icons: 24 x 24 ---------- */
const Ax = () => <path d="M1.500 1v21.500H24" stroke={G} />;
const R = ({ d, f = "#fff", s = G }: { d: [number, number, number, number]; f?: string; s?: string }) => <rect x={d[0]} y={d[1]} width={d[2]} height={d[3]} fill={f} stroke={s} strokeWidth="1.400" />;
const LG = "#c8c6c4";
const Funnel = () => <path d="M11.500 13h12l-4.500 5v6h-3v-6z" fill="#fff" strokeWidth="1.400" />;
const Bolt = () => <path d="M5 1h6L9 6h3L3 15l2-6H1z" fill="#fbd08c" stroke="#d8730f" strokeWidth="1.300" />;
const gallery: React.ReactNode[] = [
  <><R d={[2, 4, 5, 4]} /><R d={[7, 4, 9, 4]} f={LB} s={B} /><R d={[2, 14, 9, 4]} /><R d={[11, 14, 9, 4]} f={LG} s={M} /><Ax /></>,
  <><R d={[5, 8, 5, 8]} f={LB} s={B} /><R d={[5, 16, 5, 6]} /><R d={[15, 3, 5, 9]} f={LG} s={M} /><R d={[15, 12, 5, 10]} /><Ax /></>,
  <><R d={[2, 2, 21, 4.500]} f={LB} s={B} /><R d={[2, 6.500, 12, 4.500]} /><R d={[2, 12, 8, 4]} f={LG} s={M} /><R d={[2, 16, 15, 4]} /><Ax /></>,
  <><R d={[3, 2, 4.500, 20]} f={LB} s={B} /><R d={[7.500, 10, 4.500, 12]} /><R d={[12.500, 13, 4, 9]} f={LG} s={M} /><R d={[17, 7, 5, 15]} /><Ax /></>,
  <><R d={[2, 4, 4, 4.500]} /><R d={[6, 4, 15, 4.500]} f={LB} s={B} /><R d={[2, 14, 12, 4.500]} /><R d={[14, 14, 7, 4.500]} f={LG} s={M} /><Ax /></>,
  <><R d={[5, 3, 5, 14]} f={LB} s={B} /><R d={[5, 17, 5, 5]} /><R d={[15, 3, 5, 7]} f={LG} s={M} /><R d={[15, 10, 5, 12]} /><Ax /></>,
  <><path d="M1 19L13 6l5 5 6-6" stroke={B} /><path d="M1 14l8-7 7 7 7-4" /><Ax /></>,
  <><path d="M12 22L18 1l5 10v12H12z" fill={LG} stroke={M} /><path d="M1 14L9 3l8 14-8 6z" fill="#fff" /><path d="M1 23v-8l6 5 7-8 9 11z" fill={LB} stroke={B} /></>,
  <><path d="M2 5l6 6 7-7 8 2v12l-5-5-7 7-9-9z" fill={LB} stroke={B} /><Ax /></>,
  <><path d="M2 3h21v15l-6-5-8 6-7-6z" fill={LB} stroke={B} /><Ax /></>,
  <><R d={[5, 3, 5, 12]} f={LB} s={B} /><R d={[5, 15, 5, 7]} /><R d={[15, 3, 5, 6]} f={LG} s={M} /><R d={[15, 9, 5, 13]} /><path d="M2 18l7-6 6 5 8-9" /><Ax /></>,
  <><R d={[3, 12, 5, 10]} f={LB} s={B} /><R d={[8, 2, 5, 20]} /><R d={[15, 6, 5, 16]} f={LG} s={M} /><path d="M2 19l8-5 6 3 7-9" /><Ax /></>,
  <><path d="M2 10h4l5 5 5-6 7 3v9l-7-4-6 4-8-5z" fill="#fbb266" stroke="#d8730f" /><path d="M2 3l8 5 6-4 7-1v5l-7 2-6 3-8-5z" fill={LG} stroke={M} /><path d="M2 10c5 0 4 8 10 8s5-8 11-8v4c-5 0-5 8-11 8S8 14 2 14z" fill={LB} stroke={B} /><Ax /></>,
  <><R d={[3, 6, 5, 16]} /><R d={[8, 6, 6, 8]} f={LG} s={M} /><R d={[8, 14, 5, 8]} /><R d={[14, 2, 4, 8]} f={LB} s={B} /><R d={[18, 2, 4.500, 20]} /><Ax /></>,
  <><R d={[1, 2, 22, 6]} f={LB} s={B} /><R d={[4, 8, 16, 6]} f={LB} s={B} /><R d={[8, 15, 8, 6]} f={LB} s={B} /></>,
  <><g stroke="none"><path d="M17 2h4v4h-4zM5 16h4v4H5z" fill={G} /><path d="M5 6h4v4H5zM11 10h4v4h-4zM18 16h4v4h-4z" fill={LB} /></g><Ax /></>,
  <><circle cx="12" cy="12" r="11" fill="#fff" /><path d="M12 1a11 11 0 0 1 8 19L12 12z" fill={LB} stroke={B} /></>,
  <><circle cx="12" cy="12" r="8.200" stroke={LB} strokeWidth="5.500" /><circle cx="12" cy="12" r="11" stroke={B} /><circle cx="12" cy="12" r="5.500" stroke={B} /><path d="M1 11.500A11 11 0 0 1 12 1v5.500a5.500 5.500 0 0 0-5.500 5z" fill="#fff" stroke={M} /></>,
  <><R d={[1, 1, 22, 22]} /><path d="M1 1h11v22H1z" fill={LB} stroke={B} /><path d="M1 13h11" stroke={B} /><path d="M12 7h11M17 7v16M12 14h5M17 15h6" /></>,
  <><path d="M12 1a9 9 0 1 0 8 15M12 19v4M5 23h15" /><circle cx="13" cy="10" r="7" fill="#fff" /><path d="M8 8l4-3 2 3-3 3 1 3-3-1zM16 5l3 3v5l-4-1z" fill="#2f9e57" stroke="#2f9e57" strokeWidth="1" /></>,
  <><path d="M1 3h8l3 3 4-5h7v11l-5 7-6 3-6-3-5-8z" fill={LG} stroke={M} /><path d="M1 3h8v8H3zM12 11h11v5l-5 4h-4zM3 13h8v8l-6-3z" fill={LB} stroke={B} /></>,
  <g stroke="none"><path d="M14 0L1 20l11-4z" fill="#45a6dc" /><path d="M14 0l6 25-8-9z" fill="#1272c4" /><path d="M14 0L1 20l13-6z" fill="#3fa0cf" /></g>,
  <><path d="M1 17a11 10.500 0 0 1 22 0h-5a6 6 0 0 0-12 0z" fill={LB} stroke={B} /><path d="M1 17A11 10.500 0 0 1 10 6.500l1 5A6 6 0 0 0 6 17z" fill="#fff" /><path d="M11 16l6-6" strokeWidth="3" /></>,
  <><R d={[1, 4, 22, 16]} /><text x="3.500" y="15" fontSize="10.500" fill="#2b88d8" stroke="none" letterSpacing="-0.300">123</text><path d="M4 17.500h16" stroke={M} /></>,
  <><R d={[1, 1, 22, 22]} /><path d="M5 4v16" stroke={M} /><path d="M7 7h12M7 14h12" stroke={B} strokeWidth="2.200" /><path d="M7 10h7M7 17.500h6" stroke={M} /></>,
  <><R d={[1, 2, 22, 18]} /><path d="M8 7l4 6H4z" fill="#4aa564" stroke="#2f8f4e" /><path d="M13 7h7l-3.500 6z" fill="#e8384a" stroke="#d13438" /><path d="M4 16.500h16" stroke={M} /></>,
  <><R d={[1, 1, 22, 20]} /><path d="M1 4h22" strokeWidth="2.500" stroke={M} /><R d={[5, 8.500, 4, 4]} f={LG} s={M} /><R d={[5, 15, 4, 4]} f={LG} s={M} /><Funnel /></>,
  <><R d={[1, 1, 22, 22]} /><path d="M2 3h20" stroke={LG} strokeWidth="3" /><path d={grid(1, 5, 22, 18, 3, 3) + "M1 5h22"} strokeWidth="1.200" stroke={M} /><R d={[1, 1, 22, 22]} f="none" /></>,
  <><R d={[1, 1, 22, 22]} /><path d="M15.500 5H23v18H1v-6h14.500z" fill={LB} stroke="none" /><path d="M2 3h20" stroke={LG} strokeWidth="3" /><path d={grid(1, 5, 22, 18, 3, 3) + "M1 5h22"} strokeWidth="1.300" stroke={B} /><R d={[1, 1, 22, 22]} f="none" /></>,
  <text x="4" y="19" fontSize="20.500" fontWeight="700" fill="#1f83c5" stroke="none" letterSpacing="0" textLength="13" lengthAdjust="spacingAndGlyphs">R</text>,
  <text x="0" y="17" fontSize="21" fontWeight="700" fill="#1f83c5" stroke="none" letterSpacing="0" textLength="24" lengthAdjust="spacingAndGlyphs">Py</text>,
  <><path d="M2 5.500h15M2 11h12M2 17h7" stroke={M} /><circle cx="19.500" cy="5.500" r="3" fill={LB} stroke={B} /><circle cx="14.500" cy="11" r="1.700" stroke={M} /><circle cx="9.500" cy="17" r="1.700" stroke={M} /><Ax /></>,
  <><path d="M9 12h6M15 4h-3v17h3" /><R d={[1, 9.500, 8, 5]} f={LB} s={B} /><R d={[15, 1.500, 8, 5]} f={LB} s={B} /><R d={[15, 9.500, 8, 5]} f={LB} s={B} /><R d={[15, 17.500, 8, 5]} f={LB} s={B} /></>,
  <path d="M1 3h22v14H11l-5 5v-5H1z" fill="#fff" stroke={B} />,
  <><path d="M4 6V1h11l6 6v16H5V13" fill="#fff" /><path d="M15 1v6h6" /><circle cx="5" cy="9.500" r="2.500" fill={LB} stroke={B} /><path d="M9 11h9M9 15h6" stroke="#2b88d8" /></>,
  <><path d="M6 4H1c0 6 2 9 6 9M18 4h5c0 6-2 9-6 9M12 16v4" /><path d="M6 2h12v9c0 8-12 8-12 0z" fill="#fff" /><R d={[6, 1, 12, 3.500]} f={LB} s={B} /><R d={[7, 20, 10, 3]} f={LB} s={B} /></>,
  <><path d="M3 1h11l7 7v15H3z" fill="#fff" strokeWidth="1.800" /><path d="M14 1v7h7" /><path d="M7.500 20v-5M12 20v-3M16.500 20v-8" strokeWidth="3" /></>,
  <><R d={[2, 4, 21, 16]} /><text x="7" y="15.500" fontSize="10.500" fill="#2b88d8" stroke="none" letterSpacing="-0.500">123</text><path d="M5 18h15" stroke={M} /><Bolt /></>,
  <><R d={[13, 2, 9, 9]} s={M} /><R d={[2, 13, 8, 8]} s={M} /><R d={[7, 6, 6, 6]} f={LB} s={B} /><Bolt /><Funnel /></>,
  <><R d={[2, 1, 21, 22]} f={LB} s={B} /><path d="M19 2c-6 3 1 8-4 10s-4 4-9 4v6h9c-2-5 7-4 4-10 2-3 0-6 2-9z" fill="#fff" stroke={B} strokeWidth="1" /><path d="M4 14C0 8 0 5 0 4c0-5 8-5 8 0 0 3-1 5-4 10z" fill="#dc6a10" stroke="#fafafa" strokeWidth=".6" /><circle cx="21" cy="20" r="4" fill="#dc6a10" stroke="#fff" /></>,
  <g stroke="#8a3ba8" strokeWidth="1.300" strokeLinejoin="round"><path d="M8 2h2l2 2 2-2h2l7 10-7 10h-2l-2-2-2 2H8L1 12z" fill="#fff" /><path d="M12 4l5 6-5 5-5-5zM7 10l-5 2 6 6 4-3M17 10l5 2-6 6-4-3v5" /></g>,
  <g stroke="#1a73d1"><path d="M1 3h14l8 9-8 10H1l9-10z" fill="#fff" /><path d="M7 3l10 9-10 10M5 17L15 6M9 20l11-12" /></g>,
];

/* ---------- fields ---------- */
const fields: [string, "s" | "", boolean?][] = [
  ["acousticness", "s"], ["danceability", "s"], ["duration_ms", "s"], ["energy", "s"], ["instrumentaln...", "s"], ["key", "s"], ["liveness", "s"], ["loudness", "s"], ["mode", "s"],
  ["playlist_ge...", ""], ["playlist_id", ""], ["playlist_name", "", true], ["playlist_subge...", ""], ["speechiness", "s"], ["tempo", "s"], ["track_album_id", ""], ["track_album_n...", "", true],
  ["track_album_r...", ""], ["track_artist", "", true], ["track_id", ""], ["track_name", ""], ["track_popularity", "s"], ["valence", "s"],
];
const Expand = () => <I w={16} h={16} sw={1.500}><path d="M1 1l7 7-7 7M8 1l7 7-7 7" /></I>;
const WellField = ({ name, h }: { name: string; h: number }) => (
  <Well h={h}><Pill><span>{name}</span><I w={15} h={9} sw={1.200}><path d="M1 1l6.500 6.500L14 1" /></I><I w={11} h={11} sw={1.300}><path d="M1 1l9 9M10 1l-9 9" /></I></Pill></Well>
);

/* ---------- taskbar apps: 30 x 30 ---------- */
const apps: { run?: boolean; on?: boolean; art: React.ReactNode }[] = [
  { art: <><rect x="0" y="8" width="22" height="20" rx="1" fill="#77797b" /><rect x="8" y="1" width="22" height="20" rx="1" fill="#f0f0f0" /><rect x="8" y="8" width="14" height="13" fill="#b9b9b9" /></> },
  { art: <><path d="M0 4q0-2 2-2h8l4 4h14q2 0 2 2v18H0z" fill="#e2a10c" /><path d="M0 7h30v19q0 2-2 2H2q-2 0-2-2z" fill="#ffcf48" /><path d="M6 22q0-2 2-2h14q2 0 2 2v6H6z" fill="#1273c4" /><path d="M10 24h10" stroke="#0b4f92" strokeWidth="1.600" /></> },
  { run: true, art: <><circle cx="15" cy="15" r="15" fill="#fbc116" /><path d="M2 7.500A15 15 0 0 0 15 30l6.500-11-6.500 3-7-3z" fill="#29a04a" /><path d="M2 7.500A15 15 0 0 1 28 7.500H15L8.500 19z" fill="#e33b2e" /><circle cx="15" cy="15" r="7.300" fill="#fff" /><circle cx="15" cy="15" r="5.700" fill="#2f7de9" /></> },
  { art: <><circle cx="15" cy="15" r="15" fill="#1473b8" /><path d="M1 11C4 0 21-3 28 8c5 9-3 14-10 11 5-3 1-11-6-11-6 0-9 2-11 3z" fill="#43c8a8" /><path d="M12 8c-9 4-8 19 7 20 4 0 7-1 9-5-8 5-17-1-15-8 0-3 2-4 3-4z" fill="#0d4f96" /><path d="M14 13c-2 4 0 8 5 9 5 0 9-1 11-5 0-2 0-2-1-3-2 5-7 6-11 5 2-2 1-6-4-6z" fill="#21272b" /><path d="M18 19c4 2 12 0 12-6C27 3 20 1 14 2c10 0 12 13 4 17z" fill="#6bdc74" /></> },
  { art: <><path d="M22 0l8 4v22l-8 4L8 18l-5 4-3-2v-3l4-3-4-3V9l3-2 5 4zM22 8l-9 7 9 7z" fill="#2196e8" fillRule="evenodd" /><path d="M22 0l8 4v22l-8 4z" fill="#3db4f7" /></> },
  { art: <svg x="0" y="2" width="30" height="27"><CopilotMark size={30} id="tb" /></svg> },
  { art: <><rect x="0" y="4" width="30" height="22" rx="5" fill="#f80639" /><path d="M12 10.500l7.500 4.500-7.500 4.500z" fill="#fff" /></> },
  { art: <><rect width="30" height="30" fill="#1b1c1d" /><path d="M15 5h-3.200a3.300 3.300 0 0 0 0 6.600H15z" fill="#f24e1e" /><path d="M15 5h3.200a3.300 3.300 0 0 1 0 6.600H15z" fill="#ff7262" /><path d="M15 11.600h-3.200a3.300 3.300 0 0 0 0 6.600H15z" fill="#a259ff" /><circle cx="18.300" cy="14.900" r="3.300" fill="#1abcfe" /><path d="M15 18.200h-3.200a3.300 3.300 0 1 0 3.200 3.300z" fill="#0acf83" /></> },
  { run: true, art: <><path d="M1.500 29l2-7.500A13.500 13.500 0 1 1 8.500 27z" fill="none" stroke="#2fd366" strokeWidth="2.600" /><path d="M10 8c-4 4 5 15 12 14 3-1 3-4 2-5l-4-2-2 3c-3-1-5-4-6-6l2-2-2-4q-1 0-2 2z" fill="#2fd366" /></> },
  { run: true, art: <><path d="M9 7V2h12v5" fill="none" stroke="#1e9be8" strokeWidth="2" /><path d="M1 6h28v21q0 3-3 3H4q-3 0-3-3z" fill="#f0f0f0" /><path d="M9 12h5.500v5.500H9z" fill="#f25022" /><path d="M15.500 12H21v5.500h-5.500z" fill="#7fba00" /><path d="M9 18.500h5.500V24H9z" fill="#00a4ef" /><path d="M15.500 18.500H21V24h-5.500z" fill="#ffb900" /></> },
  { run: true, on: true, art: <><rect x="16" y="0" width="10" height="30" rx="1" fill="#d89608" /><rect x="9" y="7" width="10" height="23" rx="1" fill="#efb917" /><rect x="3" y="15" width="10" height="15" rx="1" fill="#f8db5c" /></> },
  { run: true, art: <><rect x="14" y="4" width="14" height="22" rx="1" fill="#fff" stroke="#1b7a45" strokeWidth="1.500" /><path d="M18 7h8M18 10h8M18 13h8M18 16h8M18 19h8M18 22h8" stroke="#1b7a45" strokeWidth="1.500" /><path d="M1 5l17-3v26L1 25z" fill="#14733e" /><path d="M6 10l7 10M13 10L6 20" stroke="#fff" strokeWidth="2.200" /></> },
];

export default function App() {
  return (
    <Screen>
      <Global />
      <TitleBar>
        <QuickIcons>
          <I w={20} h={20} s="#e8e8e8" sw={1.300}><path d="M1 1h18v18H4l-3-3zM5 1v8h10V1M6 19v-6h8v6M8.500 19v-3" /></I>
          <I w={20} h={20} s="#fff" sw={1.400}><path d="M3 2v7h7M3 9c3-6 7-8 11-6 4 3 3 7 0 10l-5 6" /></I>
          <I w={20} h={20} s="#797775" sw={1.400}><path d="M17 2v7h-7M17 9C14 3 10 1 6 3c-4 3-3 7 0 10l5 6" /></I>
        </QuickIcons>
        <AppTitle>Untitled - Power BI Desktop</AppTitle>
        <TitleSearch><I w={20} h={20} sw={1.500}><circle cx="13" cy="7" r="6" /><path d="M9 12l-8 7" /></I>Search</TitleSearch>
        <SignIn>Sign in<I w={25} h={25} s="#111" sw={1.500}><circle cx="12.500" cy="12.500" r="12.300" fill="#f3f2f1" stroke="none" /><circle cx="12.500" cy="7" r="3.700" /><path d="M6 13.500h13v1.500c0 7-13 7-13 0z" /></I></SignIn>
        <WindowButtons>
          <I w={13} h={13} s="#fff" sw={1.400}><path d="M0 6h13" /></I>
          <I w={14} h={14} s="#fff" sw={1.300}><rect x="1" y="1" width="12" height="12" rx="2" /></I>
          <I w={13} h={13} s="#fff" sw={1.300}><path d="M0 0l13 13M13 0L0 13" /></I>
        </WindowButtons>
      </TitleBar>

      <RibbonWrap>
        <TabRow>
          <Tab w={82}><span>File</span></Tab><Tab w={86} $active><span>Home</span></Tab><Tab w={83}><span>Insert</span></Tab><Tab w={114}><span>Modeling</span></Tab>
          <Tab w={76}><span>View</span></Tab><Tab w={109}><span>Optimize</span></Tab><Tab w={75}><span>Help</span></Tab><Tab w={94} $context $gap={5}><span>Format</span></Tab><Tab w={124} $context><span>Data / Drill</span></Tab>
          <ShareButton><I w={20} h={19} s="#fff" sw={1.500}><path d="M5 5H1v13h14v-4M12 1l7 6-7 6V9.500c-4 0-6 1-8 4 .5-5 3-8 8-8.500z" /></I><span>Share</span><I w={14} h={9} s="#fff" sw={1.600}><path d="M1 1l6 6 6-6" /></I></ShareButton>
        </TabRow>
        <Groups>
          <Group w={201}>
            <GroupBody $pad={7}>
              <RibbonButton w={56} $off>
                <Ribbon48><g transform="translate(10 0)"><rect x="0.500" y="8" width="26" height="31" fill="#fdf3dc" stroke="#ecc99b" /><path d="M6 13V8h4c0-5 8-5 8 0h4v5z" fill="#fafafa" stroke="#bebbb8" /><rect x="17" y="20" width="17" height="21" fill="#fafafa" stroke="#a8a6a4" /></g></Ribbon48>
                <RibbonText>Paste</RibbonText>
              </RibbonButton>
              <ClipList>
                <ClipItem><I w={23} h={22}><path d="M8 1l7 14M17 1l-7 14" /><circle cx="9" cy="18" r="2.800" stroke="#2b88d8" /><circle cx="16" cy="18" r="2.800" stroke="#2b88d8" /></I>Cut</ClipItem>
                <ClipItem><I w={23} h={22}><path d="M8 19H3V1h7l3 3M10 6h6l5 5v10H10zM16 6v5h5M12.500 14h6M12.500 17h6" /></I>Copy</ClipItem>
                <ClipItem><I w={23} h={22}><path d="M3 10l8-5 8 7-8 8z" fill="#fde2c2" stroke="#d8730f" /><path d="M3 10l9 4M7 13l6 3" stroke="#d8730f" /><path d="M11 4l9 8 1-3-3-3 4-4-2-2-4 4-3-2z" fill="#fff" /></I>Format painter</ClipItem>
              </ClipList>
            </GroupBody>
            <GroupLabel>Clipboard</GroupLabel>
          </Group>
          {groups.map(g => (
            <Group key={g.label} w={g.w}>
              <GroupBody $pad={g.pad}>
                {g.btns.map(b => (
                  <RibbonButton key={b.a + b.b} w={b.w} $off={b.off}>
                    {b.icon}
                    <RibbonText><div>{b.a}</div><div>{b.b}{b.caret && <Caret c={b.off ? "#c8c6c4" : G} />}</div></RibbonText>
                  </RibbonButton>
                ))}
              </GroupBody>
              <GroupLabel>{g.label}</GroupLabel>
            </Group>
          ))}
          <Collapse><I w={12} h={9} sw={2.200}><path d="M1 8l5-6 5 6" /></I></Collapse>
        </Groups>
      </RibbonWrap>

      <Workspace>
        <Rail>
          <RailItem $active><I w={24} h={24} s="#201f1e" sw={1.600}><path d="M5 2v20h18" /><rect x="8" y="6" width="3.500" height="13" fill="#8a8886" /><rect x="13" y="10" width="3" height="9" fill="#8a8886" /><rect x="18" y="4" width="3" height="15" fill="#8a8886" /></I></RailItem>
          <RailItem><I w={26} h={24} s={M}><rect x="4" y="2" width="19" height="18" /><path d={grid(4, 6, 19, 14, 3, 3) + "M4 5h19"} /></I></RailItem>
          <RailItem><I w={26} h={24} s={M}><rect x="15" y="1" width="9" height="8" /><rect x="3" y="7" width="8" height="9" /><rect x="15" y="14" width="9" height="8" /><path d="M15 4h4M15 4h9M3 10h8M15 17h9M15 5H8v2M8 16v4h7" /></I></RailItem>
          <RailItem><I w={26} h={24} s={M}><path d="M6 12V2h7l6 6v11q0 3-3 3M13 2v6h6M19 6q3 2 2 8" /><rect x="0" y="14" width="17" height="9" fill={PANE} stroke="none" /><text x="1" y="22.500" fontSize="10.500" fontWeight="600" fill={M} stroke="none" letterSpacing="0" textLength="17" lengthAdjust="spacingAndGlyphs">DAX</text></I></RailItem>
          <RailItem><I w={26} h={24} s={M}><path d="M6 12V2h7l6 6v5M13 2v6h6" /><text x="1" y="22.500" fontSize="10.500" fontWeight="600" fill={M} stroke="none" letterSpacing="0" textLength="24" lengthAdjust="spacingAndGlyphs">TMDL</text></I></RailItem>
        </Rail>

        <Center>
          <CanvasRow>
            <Canvas><Chart /></Canvas>
            <FiltersPane>
              <I w={16} h={16} sw={1.500}><path d="M8 1L1 8l7 7M15 1L8 8l7 7" /></I>
              <FilterGlyph><I w={14} h={16} sw={1.500}><path d="M13 1v14L7 10H0V6h7z" /></I></FilterGlyph>
              <FiltersTitle>Filters</FiltersTitle>
            </FiltersPane>
          </CanvasRow>
          <PageBar>
            <LayoutButtons>
              <LayoutButton $active><I w={25} h={22} s="#605e5c" sw={1.700}><rect x="1.500" y="4" width="22" height="13" /><path d="M12.500 17v4M8 21h9" /></I></LayoutButton>
              <LayoutButton><I w={18} h={26} s="#605e5c" sw={1.700}><rect x="2" y="1" width="14" height="23" rx="1" /><path d="M7.500 20.500h3" /></I></LayoutButton>
            </LayoutButtons>
            <PageArrows><I w={6} h={11} s="none"><path d="M6 0v10L0 5z" fill="#c8c6c4" /></I><I w={6} h={11} s="none"><path d="M0 0v10l6-5z" fill="#c8c6c4" /></I></PageArrows>
            <PageTab>Page 1</PageTab>
            <AddPage><I w={14} h={14} s="#fff" sw={3.600}><path d="M7 0v14M0 7h14" /></I></AddPage>
          </PageBar>
        </Center>

        <VizPane>
          <PaneHead>Visualizations<Expand /></PaneHead>
          <BuildLabel>Build visual</BuildLabel>
          <ModeRow>
            <Mode $on><I w={30} h={30}><path d="M0 1h24" stroke="#201f1e" /><rect x="0.500" y="6.500" width="29" height="9" fill={GREEN} stroke="#201f1e" strokeDasharray="2 1.500" /><rect x="0.500" y="20.500" width="29" height="9" fill={GREEN} stroke="#201f1e" strokeDasharray="2 1.500" /></I></Mode>
            <Mode><I w={28} h={30}><path d="M1 26V12h8M9 22V2h8v16M17 8h8v4M9 26H6" /><path d="M28 10L17 22l3 3 9-13zM17 22c-5 0-3 5-8 7 5 1 11 1 11-4" fill="#f3f2f1" /></I></Mode>
            <Mode><I w={32} h={32} sw={1.600}><circle cx="14" cy="14" r="12.500" fill="#fff" /><path d="M3 15l6-4 5 2 8-6M8 22v-5M12 25v-9M16 25V15M20 23V13" /><path d="M23 24l7 7" strokeWidth="3.600" /></I></Mode>
          </ModeRow>
          <I w={226} h={22} s="#8a8886" sw={1}><path d="M0 15.500h20.500l10-10 10 10H226" /></I>
          <Gallery>{gallery.map((g, i) => <GalleryCell key={i} $on={i === 9}><I w={24} h={24}>{g}</I></GalleryCell>)}</Gallery>
          <MoreVisuals><Dots $size={2} $gap={6} $color="#252423"><i /><i /><i /></Dots></MoreVisuals>
          <Wells>
            <WellList>
              <WellLabel $top={9} $bottom={6}>X-axis</WellLabel><WellField name="track_album_name" h={45} />
              <WellLabel $top={11} $bottom={6}>Y-axis</WellLabel><WellField name="Count of playlist_name" h={36} />
              <WellLabel $top={12} $bottom={6}>Legend</WellLabel><WellField name="track_artist" h={36} />
              <WellLabel $top={12} $bottom={6}>Small multiples</WellLabel><Well h={36}><Hint>Add data fields here</Hint></Well>
              <WellLabel $top={11} $bottom={6}>Tooltips</WellLabel><Well h={36} />
            </WellList>
            <WellScroll />
          </Wells>
        </VizPane>

        <DataPane>
          <PaneHead>Data<Expand /></PaneHead>
          <DataSearch><I w={18} h={18} s="#605e5c" sw={1.300}><circle cx="7.500" cy="7" r="6.500" /><path d="M12 12l6 6" /></I>Search</DataSearch>
          <FieldArea>
            <FieldList>
              {fields.map(([name, sum, on], i) => (
                <Field key={name} $cut={i === 0}>
                  <Check $on={on} $cut={i === 0}>{on && <I w={11} h={9} s="#fff" sw={1.600}><path d="M0 4l4 4 7-7" /></I>}</Check>
                  <SigmaSlot>{sum && <I w={13} h={16} sw={1.500}><path d="M13 1H1l7 7-7 7h12" /></I>}</SigmaSlot>
                  <FieldName>{name}</FieldName>
                  {name === "playlist_ge..." && <FieldMore><Dots $size={2} $gap={4} $color="#605e5c"><i /><i /><i /></Dots></FieldMore>}
                </Field>
              ))}
            </FieldList>
            <FieldScroll />
          </FieldArea>
        </DataPane>
      </Workspace>

      <StatusBar>
        Page 1 of 1
        <ZoomTools>
          <I w={152} h={16} s="#605e5c" sw={1.300}><path d="M0 8h6" strokeWidth="2" /><path d="M11 8h125M74 4v8" /><rect x="59" y="1.500" width="4.500" height="13" fill="#605e5c" stroke="none" /><path d="M142 8h10M147 3v10" strokeWidth="1.900" /></I>
          <span>82%</span>
          <I w={21} h={16} s="#605e5c" sw={1.400}><rect x="1" y="1" width="19" height="14" /><path d="M4 6V4h3M14 4h3v2M17 10v2h-3M7 12H4v-2" /></I>
        </ZoomTools>
      </StatusBar>

      <Taskbar>
        <Weather>
          <svg width="35" height="40" viewBox="-1 1 35 40"><circle cx="23" cy="25" r="7" fill="#f28a1c" /><path d="M6 37a6.500 6.500 0 0 1 0-13C8 14 20 15 22 22c10 0 10 15 2 15z" fill="#a9c6f5" /><path d="M6 37a6 6 0 0 1-4-9c8 5 20 4 27 0 1 5-1 9-5 9z" fill="#d4e2fb" /><circle cx="24" cy="9" r="10" fill="#c42b1c" /><text x="24" y="14" textAnchor="middle" fontSize="13.500" fill="#fff">3</text></svg>
          <Lines>31°C<br /><small>Mostly cloudy</small></Lines>
        </Weather>
        <svg width="30" height="30" viewBox="0 0 30 30"><path d="M1 1h14v14H1z" fill="#6fd2fb" /><path d="M16 1h14v14H16z" fill="#48bef8" /><path d="M1 16h14v14H1z" fill="#38b4f7" /><path d="M16 16h14v14H16z" fill="#169af3" /></svg>
        <TaskSearch>
          <I w={19} h={19} s="#222" sw={2}><circle cx="8" cy="7.500" r="6.500" /><path d="M12.500 12.500l5.500 6" /></I><span>Search</span>
          <svg width="54" height="32" viewBox="0 0 54 32">
            <path d="M1 3C8-1 22 6 29 17 20 17 3 15 1 3z" fill="#3f8f83" /><path d="M4 4c9 1 17 7 24 13" stroke="#d6e4c4" fill="none" /><path d="M6 5l1 6M11 6l2 7M16 9l3 6M21 11l3 5M9 4l5 1M16 6l5 3" stroke="#1c5f70" /><circle cx="5.500" cy="5" r="2.800" fill="#2a7fc0" />
            <circle cx="9" cy="25" r="6.500" fill="#f5840c" /><circle cx="7" cy="22" r="3" fill="#ff9c1c" /><circle cx="23" cy="24" r="8" fill="#fdbb05" /><circle cx="21" cy="19" r="4" fill="#ffd02e" /><circle cx="26" cy="25" r="3.500" fill="#ffcf20" />
            <path d="M33 9c-2-5 4-8 8-8s11 3 9 8z" fill="#f2e3bd" /><path d="M33 9h18v3H33z" fill="#c45a1a" /><path d="M35 12h14c5 5 7 17 0 19H36c-7-2-6-14-1-19z" fill="#b64a16" /><path d="M32 18q10 5 21 0M31 25q11 5 22 0" stroke="#ffd36b" strokeWidth="1.500" fill="none" /><path d="M34 22h17" stroke="#fff0b4" strokeWidth="1.500" strokeDasharray="2 2" />
          </svg>
        </TaskSearch>
        <Apps>
          {apps.map((a, i) => <AppSlot key={i} $on={a.on}><svg width="30" height="30" viewBox="0 0 30 30">{a.art}</svg>{a.run && <Running $on={a.on} />}</AppSlot>)}
        </Apps>
        <Tray>
          <I w={14} h={9} s="#fff" sw={1.700}><path d="M1 8l6-6 6 6" /></I>
          <TrayCloud><svg width="21" height="16" viewBox="0 0 21 16"><path d="M5 14a5 5 0 0 1 0-9C7-1 15 0 16 5c6 0 6 9 1 9z" fill="#e7e5e6" /><path d="M4 5C7-1 14 0 15 5L9 9z" fill="#a9a7a8" /></svg></TrayCloud>
          <Lines $align="center" w={28}>ENG<br />US</Lines>
          <TrayIcons>
            <I w={21} h={17} s="#fff" sw={1.600}><path d="M1 6c5-6 14-6 19 0M4 9c4-4.500 9-4.500 13 0M7 12c2-2.500 5-2.500 7 0" /><circle cx="10.500" cy="14.500" r="1.800" fill="#fff" stroke="none" /></I>
            <I w={20} h={17} s="#fff" sw={1.400}><path d="M1 6h3l5-4v13l-5-4H1zM12 6q2 2.500 0 5M14.500 4q4 4.500 0 9M17 2q5 6.500 0 13" /></I>
            <I w={21} h={17} s="#fff" sw={1.400}><path d="M8 4h8q2 0 2 2v7q0 2-2 2H5q-2 0-2-2v-1M20 8v4" /><path d="M8 7h8v5.500H6z" fill="#fff" stroke="none" /><path d="M5 0L1 8h3v5l4-8H5z" fill="#fff" stroke="none" /></I>
          </TrayIcons>
          <Lines $align="right" w={100}>15:42<br />16-08-2025</Lines>
        </Tray>
      </Taskbar>
    </Screen>
  );
}
